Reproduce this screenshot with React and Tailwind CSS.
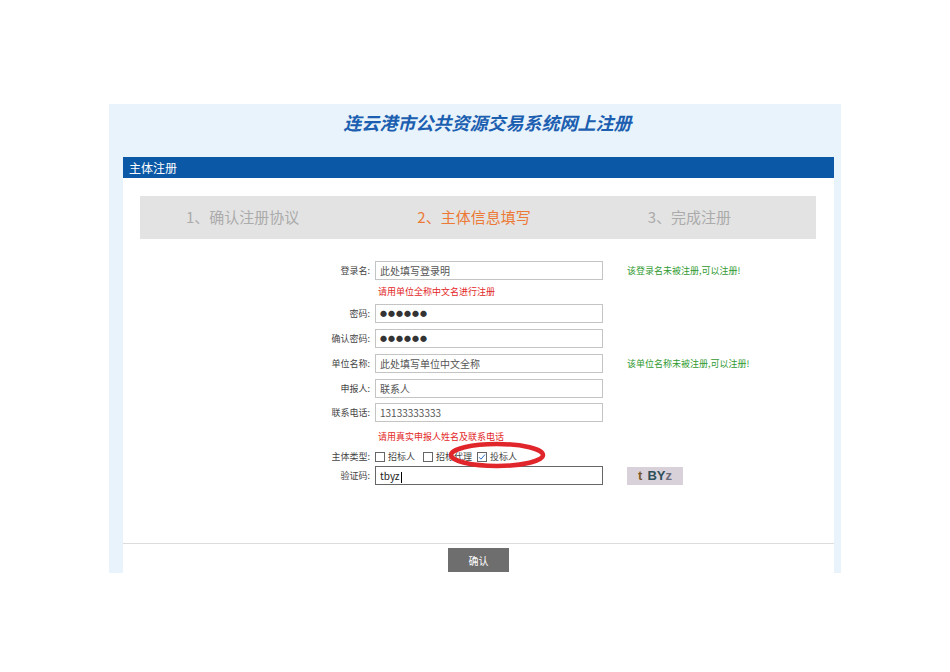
import React from "react";

const font = { fontFamily: '"Noto Sans CJK SC", "Noto Sans", sans-serif' };

const Field = ({ label, value, dots, message, focused, className = "" }) => (
  <div className={`flex items-center h-[19px] ${className}`}>
    <div className="w-[100px] text-right text-[9px] text-[#444] pr-[5px]">{label}:</div>
    <div
      className={`w-[228px] h-[19px] flex items-center px-[4px] bg-white border ${
        focused ? "border-[#666]" : "border-[#c4c4c4]"
      }`}
    >
      {dots ? (
        <span className="text-[7px] tracking-[1px] text-[#333]">●●●●●●</span>
      ) : (
        <span className={`text-[10px] ${focused ? "text-[#222]" : "text-[#555]"}`}>
          {value}
          {focused && <span className="inline-block w-[1px] h-[11px] bg-black align-middle ml-[1px]"></span>}
        </span>
      )}
    </div>
    {message && <div className="ml-[24px] text-[9px] text-[#2f9a2f]">{message}</div>}
  </div>
);

const Hint = ({ children, className = "" }) => (
  <div className={`pl-[103px] text-[9px] text-[#e32626] ${className}`}>{children}</div>
);

const Box = ({ checked }) => (
  <span className="w-[10px] h-[10px] border border-[#666] bg-white flex items-center justify-center">
    {checked && (
      <svg width="8" height="8" viewBox="0 0 8 8">
        <path d="M1 4.2 L3 6.2 L7 1.5" stroke="#2a6fc9" strokeWidth="1" fill="none" />
      </svg>
    )}
  </span>
);

const App = () => {
  return (
    <div className="min-h-screen bg-white pt-[104px]" style={font}>
      <div className="mx-auto w-[732px] bg-[#e8f3fc] pl-[14px] pr-[7px]">
        <h1 className="h-[36px] flex items-center justify-center pl-[18px] text-[18px] font-bold italic text-[#1c5fb0] mb-[17px]">
          连云港市公共资源交易系统网上注册
        </h1>
        <div className="h-[21px] bg-[#0b58a6] flex items-center pl-[6px] text-[12px] text-white">主体注册</div>
        <div className="bg-white h-[395px] flex flex-col">
          <div className="mt-[18px] ml-[17px] mr-[18px] h-[43px] bg-[#e3e3e3] grid grid-cols-3 items-center text-[15px]">
            <div className="text-center pr-[20px] text-[#ababab]">1、确认注册协议</div>
            <div className="text-center pr-[8px] text-[#ec7a36]">2、主体信息填写</div>
            <div className="text-center pr-[28px] text-[#ababab]">3、完成注册</div>
          </div>
          <div className="h-[304px] pt-[22px] pl-[152px] relative">
            <Field label="登录名" value="此处填写登录明" message="该登录名未被注册,可以注册!" />
            <Hint className="h-[24px] flex items-center">请用单位全称中文名进行注册</Hint>
            <Field label="密码" dots />
            <Field label="确认密码" dots className="mt-[6px]" />
            <Field label="单位名称" value="此处填写单位中文全称" message="该单位名称未被注册,可以注册!" className="mt-[6px]" />
            <Field label="申报人" value="联系人" className="mt-[6px]" />
            <Field label="联系电话" value="13133333333" className="mt-[5px]" />
            <Hint className="h-[25px] flex items-center pt-[4px]">请用真实申报人姓名及联系电话</Hint>
            <div className="flex items-center h-[19px] text-[9px] text-[#444]">
              <div className="w-[100px] text-right pr-[5px]">主体类型:</div>
              <div className="flex items-center gap-[2px]">
                <Box />
                <span className="ml-[1px] mr-[6px]">招标人</span>
                <Box />
                <span className="ml-[1px] mr-[3px]">招标代理</span>
                <Box checked />
                <span className="ml-[1px]">投标人</span>
              </div>
            </div>
            <div className="flex items-center">
              <Field label="验证码" value="tbyz" focused />
              <div className="ml-[24px] w-[56px] h-[18px] bg-[#d9d1d9] flex items-center justify-center text-[13px] font-bold" style={{ fontFamily: '"Liberation Sans", sans-serif' }}>
                <span className="text-[#7a5a2a]">t</span>
                <span className="ml-[5px] text-[#2f4f5a]">BY</span>
                <span className="text-[#6a6a7a]">z</span>
              </div>
            </div>
            <svg className="absolute left-[323px] top-[201px]" width="102" height="30" viewBox="0 0 102 30">
              <ellipse cx="51" cy="15" rx="46" ry="11" fill="none" stroke="#e0262b" strokeWidth="4.5" />
            </svg>
          </div>
          <div className="flex-1 border-t border-[#dcdcdc] flex justify-center pt-[4px]">
            <button className="w-[61px] h-[24px] bg-[#6e6e6e] text-white text-[10px]">确认</button>
          </div>
        </div>
      </div>
    </div>
  );
};

export default App;
